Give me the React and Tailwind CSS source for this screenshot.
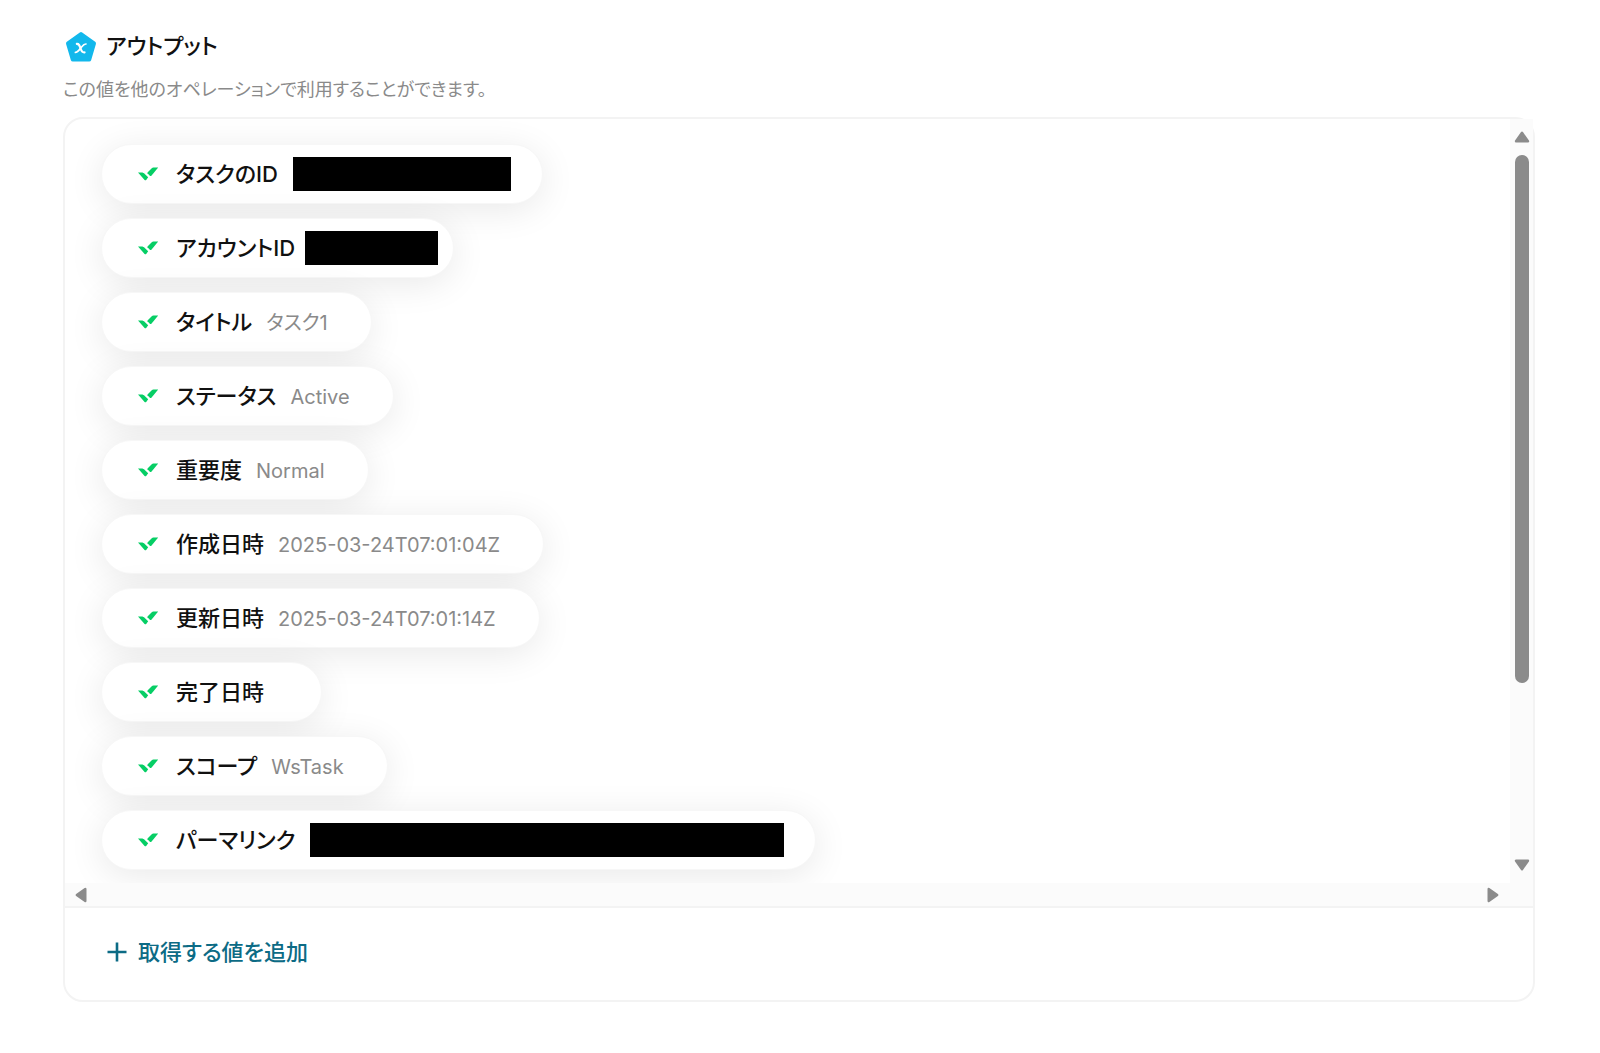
import React from "react";

const OUTPUTS = [
  { label: "タスクのID", masked: "ml-[15px] -mr-3 w-[218px]" },
  { label: "アカウントID", masked: "ml-2.5 -mr-7 w-[133px]" },
  { label: "タイトル", value: "タスク1" },
  { label: "ステータス", value: "Active" },
  { label: "重要度", value: "Normal" },
  { label: "作成日時", value: "2025-03-24T07:01:04Z" },
  { label: "更新日時", value: "2025-03-24T07:01:14Z" },
  { label: "完了日時", value: "" },
  { label: "スコープ", value: "WsTask" },
  { label: "パーマリンク", masked: "ml-[15px] -mr-3 w-[474px]" },
];

function PentagonIcon() {
  return (
    <svg className="mt-0.5 h-8 w-8 shrink-0" viewBox="0 0 32 32" aria-hidden="true">
      <path
        d="M16 3 L29 12.4 L24.2 28.6 H7.8 L3 12.4 Z"
        fill="#12b8ec"
        stroke="#12b8ec"
        strokeWidth="4"
        strokeLinejoin="round"
      />
      <g fill="none" stroke="#fff" strokeLinecap="round" strokeLinejoin="round">
        <path d="M11.8 12.9 C14 12.7 14.5 14.2 15.4 17 C16.4 20.2 17.2 21.8 19.6 21.4" strokeWidth="2.1" />
        <path d="M21 13 C18.6 12.8 17.6 14.8 15.6 17.2 C13.8 19.6 12.6 21.4 10.4 21.4" strokeWidth="1.7" />
      </g>
    </svg>
  );
}

function CheckIcon() {
  return (
    <svg className="h-[14px] w-5 shrink-0" viewBox="0 0 20 14" aria-hidden="true">
      <path d="M0 5.4 H3.4 C5 5.4 5.8 5.9 6.8 6.9 L10.2 10.2 L8.2 12.9 C7.7 13.5 7.1 13.5 6.6 12.9 Z" fill="#06ce65" />
      <path d="M20.2 0.6 H16.4 C14.9 0.6 14 1 13 2 L9.5 5.6 V6.3 L11.8 8.7 C12.3 9.1 12.9 9.1 13.4 8.7 Z" fill="#06ce65" />
    </svg>
  );
}

function Arrow({ className }) {
  return (
    <svg className={className} viewBox="0 0 16 12" aria-hidden="true">
      <path d="M8 1.8 L14 10.3 H2 Z" fill="#8b8b8b" stroke="#8b8b8b" strokeWidth="2.4" strokeLinejoin="round" />
    </svg>
  );
}

function OutputPill({ label, value, masked }) {
  return (
    <li className="flex h-[60px] items-center rounded-full border border-[#f7f7f7] bg-white pr-[43px] pl-9 shadow-[0_6px_36px_rgba(0,0,0,0.09)]">
      <CheckIcon />
      <div className="ml-[18px] flex items-baseline">
        <span className="text-[22px] leading-8 font-medium text-[#111]">{label}</span>
        {!masked && <span className="ml-3.5 text-[20px] leading-8 text-[#8a8a8a]">{value}</span>}
      </div>
      {masked && <span className={`h-[34px] bg-black ${masked}`} />}
    </li>
  );
}

export default function App() {
  return (
    <main className="min-h-screen bg-white pt-[30px] pr-[65px] pb-[52px] pl-[63px] font-['Inter','Noto_Sans_CJK_JP',sans-serif] whitespace-nowrap [font-feature-settings:'palt']">
      <header>
        <div className="flex h-8 items-center gap-[9px] pl-0.5">
          <PentagonIcon />
          <h1 className="text-[22px] leading-8 font-medium text-[#111]">アウトプット</h1>
        </div>
        <p className="mt-4 text-[18px] leading-6 text-[#8a8a8a]">
          この値を他のオペレーションで利用することができます。
        </p>
      </header>

      <section className="mt-[15px] rounded-[20px] border-2 border-[#f3f3f3]">
        <div className="flex">
          <ul className="flex min-w-0 flex-1 flex-col items-start gap-[14px] overflow-hidden pt-[25px] pr-6 pb-[13px] pl-9">
            {OUTPUTS.map((item) => (
              <OutputPill key={item.label} {...item} />
            ))}
          </ul>
          <div className="flex w-[23px] flex-col items-center bg-[#fbfbfb] pt-3 pb-3">
            <button type="button" aria-label="上へスクロール">
              <Arrow className="block h-3 w-4" />
            </button>
            <div className="mt-3 flex-1">
              <div className="h-3/4 w-[14px] rounded-full bg-[#8b8b8b]" />
            </div>
            <button type="button" aria-label="下へスクロール">
              <Arrow className="block h-3 w-4 rotate-180" />
            </button>
          </div>
        </div>
        <div className="flex h-[23px] items-center justify-between bg-[#fbfbfb] pr-8 pl-2">
          <button type="button" aria-label="左へスクロール">
            <Arrow className="block h-3 w-4 -rotate-90" />
          </button>
          <button type="button" aria-label="右へスクロール">
            <Arrow className="block h-3 w-4 rotate-90" />
          </button>
        </div>
        <div className="border-t-2 border-[#f3f3f3] pt-7 pb-8 pl-[42px]">
          <button type="button" className="flex items-center gap-[11px] text-[22px] leading-8 font-medium text-[#0c6b85]">
            <svg className="h-5 w-5" viewBox="0 0 20 20" aria-hidden="true">
              <path d="M10 0.5 V19.5 M0.5 10 H19.5" stroke="currentColor" strokeWidth="2.6" />
            </svg>
            取得する値を追加
          </button>
        </div>
      </section>
    </main>
  );
}
